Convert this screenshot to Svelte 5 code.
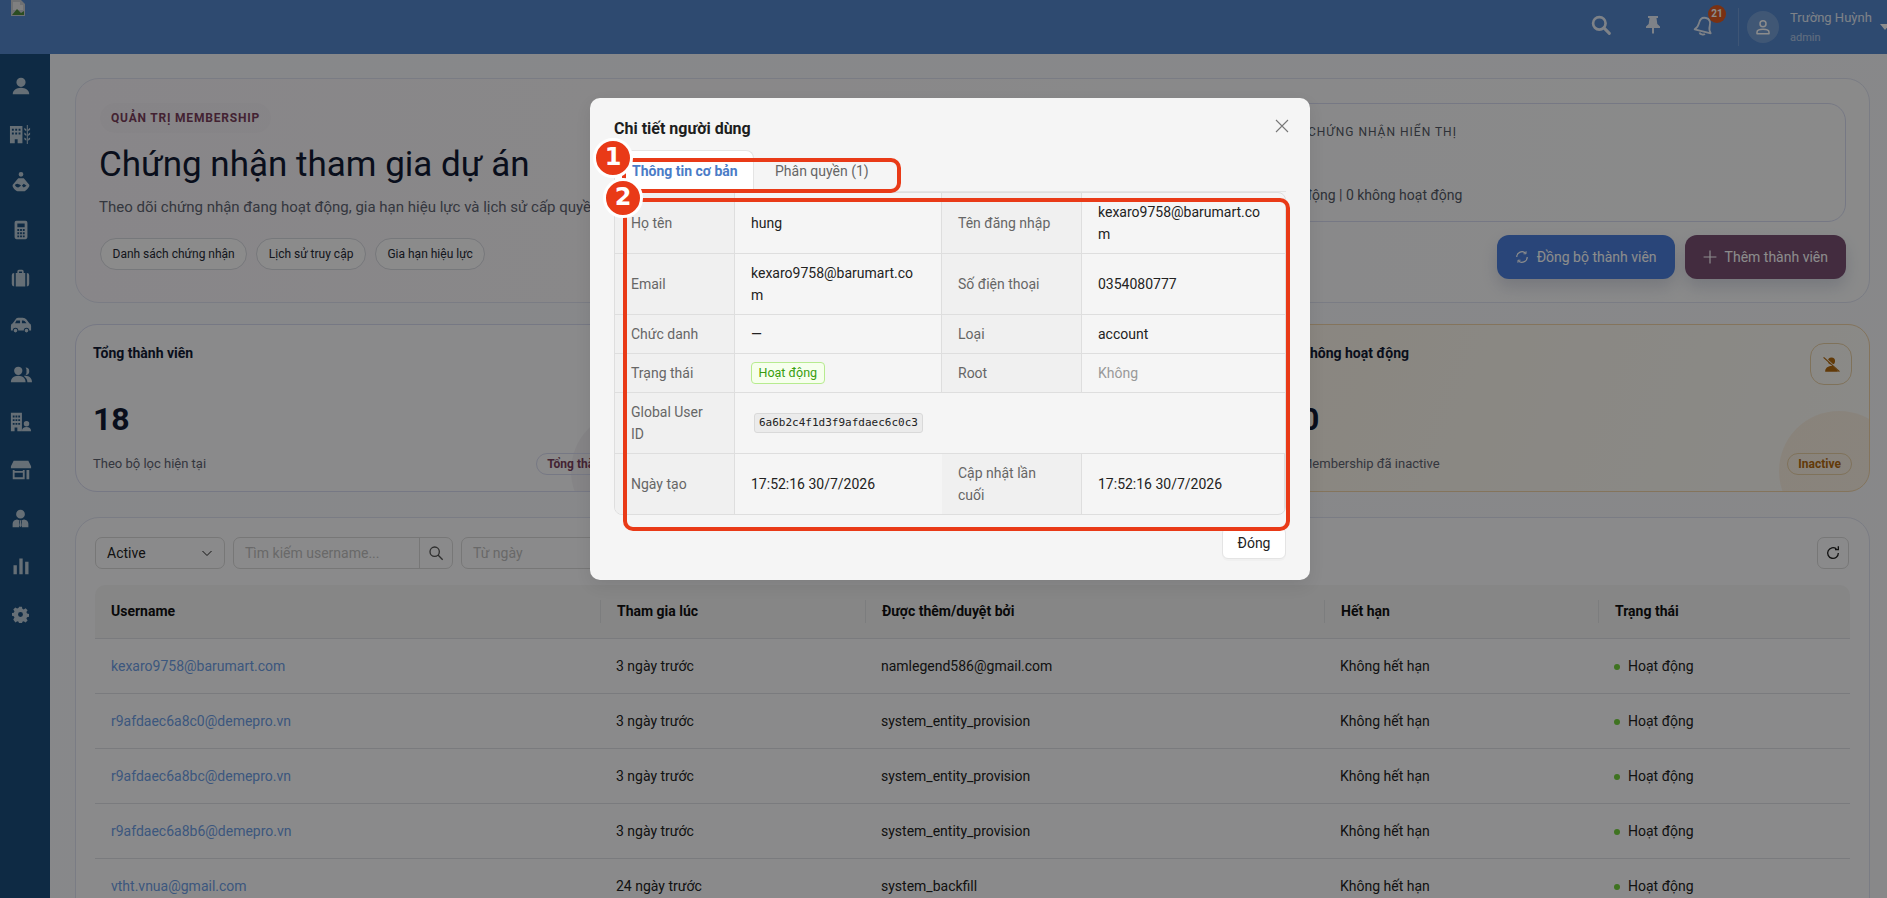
<script>
  const navIcons = [
    { size: 22, d: 'M12 3a5 5 0 1 1 0 10 5 5 0 0 1 0-10zM3 21c0-4 4-7 9-7s9 3 9 7z' },
    { size: 23, d: 'M1 3h13v18H9v-4H6v4H1zM3 6v2h2V6zm3.500 0v2h2V6zm3.500 0v2h2V6zM3 10v2h2v-2zm3.500 0v2h2v-2zm3.500 0v2h2v-2zM18.600 2h1v20h-1zM16 5l2 1.500v2L16 7zM22 5l-2 1.500v2L22 7zM16 10l2 1.500v2L16 12zM22 10l-2 1.500v2L22 12zM16 15l2 1.500v2L16 17zM22 15l-2 1.500v2L22 17z' },
    { size: 22, d: 'M12 1a2.600 2.600 0 1 1 0 5.200 2.600 2.600 0 0 1 0-5.200zM9 8h6l6 7c1 2-3 6-5 7H8c-3-1-6-5-5-7zM8 14c-1.500 0-2.500 1-2.500 1.500S7 18 9 18l3-2-1-1zM15 14l-2 2 2 2 3-2z' },
    { size: 22, d: 'M7 2h10a2 2 0 0 1 2 2v16a2 2 0 0 1-2 2H7a2 2 0 0 1-2-2V4a2 2 0 0 1 2-2zm1 3v4h8V5zm0 6v2h2v-2zm3 0v2h2v-2zm3 0v2h2v-2zM8 14.500v2h2v-2zm3 0v2h2v-2zm3 0v2h2v-2zM8 18v2h2v-2zm3 0v2h2v-2zm3 0v2h2v-2z' },
    { size: 19, d: 'M8 5V3a2 2 0 0 1 2-2h4a2 2 0 0 1 2 2v2h2v17H6V5zm2 0h4V3h-4zM4 5v17a3 3 0 0 1-3-3V8a3 3 0 0 1 3-3zM20 5a3 3 0 0 1 3 3v11a3 3 0 0 1-3 3z' },
    { size: 22, d: 'M6 5a3 3 0 0 1 3-2h5a6 6 0 0 1 4 2l3 4a3 3 0 0 1 2 3v5h-2a3 3 0 0 0-6 0H9a3 3 0 0 0-6 0H1v-5a3 3 0 0 1 2-3zm1 1L5.500 9H11V6zm6 0v3h5l-2-2.500A3 3 0 0 0 14 6zM6 15a2 2 0 1 1 0 4 2 2 0 0 1 0-4zm12 0a2 2 0 1 1 0 4 2 2 0 0 1 0-4z' },
    { size: 22, d: 'M9 4a4.500 4.500 0 1 1 0 9 4.500 4.500 0 0 1 0-9zM1 21c0-4 3-7 8-7s8 3 8 7zM17 5a4 4 0 1 1 0 8 5 5 0 0 0 1-4 5 5 0 0 0-1-4zM15 14h2c4 0 7 3 7 7h-5c0-3-2-5-4-7z' },
    { size: 22, d: 'M1 2h12v20H8v-4H5v4H1zM3 5v2h2V5zm3 0v2h2V5zm3 0v2h2V5zM3 9v2h2V9zm3 0v2h2V9zm3 0v2h2V9zM3 13v2h2v-2zm3 0v2h2v-2zm3 0v2h2v-2zM18 11a3 3 0 1 1 0 6 3 3 0 0 1 0-6zM13 22c0-3 2-4.500 5-4.500s5 1.500 5 4.500z' },
    { size: 22, d: 'M4 2h16l3 6v2H1V8zM3 12h2v1h9v-1h2v10H3zm2 3v5h9v-5zM18 12h3v10h-3z' },
    { size: 21, d: 'M12 2a5 5 0 1 1 0 10 5 5 0 0 1 0-10zM8 13l2.500 1v8H3v-4c0-3 2-4.500 5-5zM16 13c3 .5 5 2 5 5v4h-7.500v-8zM11 14h2l-.4 2 .6 4-1.200 2-1.200-2 .6-4z' },
    { size: 20, d: 'M10 3h4v19h-4zM3 11h4v11H3zM17 7h4v15h-4z' },
    { size: 17, d: 'M10 1h4l.6 3 2 .9 2.600-1.700 2.800 2.800-1.700 2.600.9 2 3 .6v4l-3 .6-.9 2 1.700 2.600-2.800 2.800-2.600-1.700-2 .9-.6 3h-4l-.6-3-2-.9-2.600 1.700L1.800 19l1.700-2.600-.9-2-3-.6V10l3-.6.9-2L1.800 4.800 4.600 2l2.600 1.700 2-.9zM12 8.500a3.500 3.500 0 1 0 0 7 3.500 3.500 0 0 0 0-7z' }
  ];

  const heroLinks = ['Danh sách chứng nhận', 'Lịch sử truy cập', 'Gia hạn hiệu lực'];

  const members = [
    { name: 'kexaro9758@barumart.com', joined: '3 ngày trước', by: 'namlegend586@gmail.com' },
    { name: 'r9afdaec6a8c0@demepro.vn', joined: '3 ngày trước', by: 'system_entity_provision' },
    { name: 'r9afdaec6a8bc@demepro.vn', joined: '3 ngày trước', by: 'system_entity_provision' },
    { name: 'r9afdaec6a8b6@demepro.vn', joined: '3 ngày trước', by: 'system_entity_provision' },
    { name: 'vtht.vnua@gmail.com', joined: '24 ngày trước', by: 'system_backfill' }
  ];

  const columns = ['Username', 'Tham gia lúc', 'Được thêm/duyệt bởi', 'Hết hạn', 'Trạng thái'];
</script>

<div class="page">
  <header class="topbar">
    <svg class="broken" viewBox="0 0 16 16" width="16" height="16">
      <path d="M1 0h10l4 4v12H1z" fill="#c9ccd2" />
      <path d="M3 2h7v3h3v5H3z" fill="#e8e8ea" />
      <path d="M2 15l5-6 4 4 3-2v4z" fill="#4f8a3c" />
    </svg>
    <div class="spacer"></div>
    <svg class="search-icon" viewBox="0 0 24 24" width="20" height="20"><circle cx="10" cy="10" r="7.500" fill="none" stroke="currentColor" stroke-width="3.200" /><path d="M15.500 15.500l6.500 6.500" stroke="currentColor" stroke-width="3.600" stroke-linecap="round" /></svg>
    <svg class="pin-icon" viewBox="0 0 14 18" width="14" height="18"><path d="M2 0h10v2h-1.500l.8 6 2.700 2.500V12H8v5l-1 1-1-1v-5H0v-1.500L2.700 8l.8-6H2z" fill="currentColor" /></svg>
    <div class="bell">
      <svg viewBox="0 0 24 24" width="22" height="22" class="bell-svg"><path d="M12 3c4 0 6 3 6 7 0 4 1 6 3 8H3c2-2 3-4 3-8 0-4 2-7 6-7zM9 20c1 2 5 2 6 0" fill="none" stroke="currentColor" stroke-width="2" stroke-linejoin="round" /></svg>
      <span class="count">21</span>
    </div>
    <div class="divider"></div>
    <div class="avatar">
      <svg viewBox="0 0 24 24" width="18" height="18"><circle cx="12" cy="7.500" r="4" fill="none" stroke="currentColor" stroke-width="2" /><path d="M4 21v-2c0-3 3-4 8-4s8 1 8 4v2z" fill="none" stroke="currentColor" stroke-width="2" stroke-linejoin="round" /></svg>
    </div>
    <div class="who">
      <div class="who-name">Trường Huỳnh</div>
      <div class="who-role">admin</div>
    </div>
    <span class="caret"></span>
  </header>

  <div class="body">
    <nav class="sidebar">
      {#each navIcons as icon}
        <div class="nav-item"><svg viewBox="0 0 24 24" width={icon.size} height={icon.size}><path d={icon.d} fill="currentColor" fill-rule="evenodd" /></svg></div>
      {/each}
    </nav>

    <main class="main">
      <section class="hero">
        <div class="hero-left">
          <span class="eyebrow">QUẢN TRỊ MEMBERSHIP</span>
          <h1>Chứng nhận tham gia dự án</h1>
          <p>Theo dõi chứng nhận đang hoạt động, gia hạn hiệu lực và lịch sử cấp quyền</p>
          <div class="hero-links">
            {#each heroLinks as link}
              <span class="hero-link">{link}</span>
            {/each}
          </div>
        </div>
        <div class="hero-right">
          <div class="panel">
            <div class="panel-label">TỔNG CHỨNG NHẬN HIỂN THỊ</div>
            <div class="panel-note">18 hoạt động | 0 không hoạt động</div>
          </div>
          <div class="actions">
            <button class="btn sync">
              <svg viewBox="0 0 24 24" width="14" height="14"><path d="M21 12a9 9 0 0 1-15.500 6.200M3 12A9 9 0 0 1 18.500 5.800" fill="none" stroke="currentColor" stroke-width="2" /><path d="M19 2v4.500h-4.500M5 22v-4.500h4.500" fill="none" stroke="currentColor" stroke-width="1.500" /></svg>
              Đồng bộ thành viên
            </button>
            <button class="btn add">
              <svg viewBox="0 0 24 24" width="14" height="14"><path d="M12 1v22M1 12h22" stroke="currentColor" stroke-width="2" /></svg>
              Thêm thành viên
            </button>
          </div>
        </div>
      </section>

      <section class="stats">
        <div class="stat">
          <div class="stat-head"><span class="stat-title">Tổng thành viên</span></div>
          <div class="stat-num">18</div>
          <div class="stat-foot"><span>Theo bộ lọc hiện tại</span><span class="chip">Tổng thành viên</span></div>
          <div class="blob"></div>
        </div>
        <div class="stat"></div>
        <div class="stat warn">
          <div class="stat-head">
            <span class="stat-title">Không hoạt động</span>
            <span class="stat-icon">
              <svg viewBox="0 0 24 24" width="19" height="19"><path d="M12 3a4.500 4.500 0 1 1 0 9 4.500 4.500 0 0 1 0-9zM4 21c0-4 3-7 8-7s8 3 8 7z" fill="currentColor" /><path d="M3 3l20 18" stroke="#fbf7ee" stroke-width="2" /><path d="M2 3l20 18" stroke="currentColor" stroke-width="1.600" /></svg>
            </span>
          </div>
          <div class="stat-num">0</div>
          <div class="stat-foot"><span>Membership đã inactive</span><span class="chip">Inactive</span></div>
          <div class="blob"></div>
        </div>
      </section>

      <section class="list">
        <div class="filters">
          <div class="select">Active
            <svg viewBox="0 0 12 12" width="12" height="12"><path d="M1.500 4l4.500 4.500L10.500 4" fill="none" stroke="currentColor" stroke-width="1" /></svg>
          </div>
          <div class="search">
            <span class="ph">Tìm kiếm username...</span>
            <span class="search-btn">
              <svg viewBox="0 0 24 24" width="16" height="16"><circle cx="10" cy="10" r="7" fill="none" stroke="currentColor" stroke-width="2" /><path d="M15 15l7 7" stroke="currentColor" stroke-width="2" /></svg>
            </span>
          </div>
          <div class="dates"><span class="ph">Từ ngày</span><span class="ph dash">→</span></div>
          <div class="spacer"></div>
          <div class="refresh">
            <svg viewBox="0 0 24 24" width="16" height="16"><path d="M20 12a8 8 0 1 1-3-6.200" fill="none" stroke="currentColor" stroke-width="2" /><path d="M20 2v5h-5" fill="none" stroke="currentColor" stroke-width="2" /></svg>
          </div>
        </div>

        <div class="table">
          <div class="row head">
            {#each columns as col}
              <div class="cell">{col}</div>
            {/each}
          </div>
          {#each members as m}
            <div class="row">
              <div class="cell link">{m.name}</div>
              <div class="cell">{m.joined}</div>
              <div class="cell">{m.by}</div>
              <div class="cell">Không hết hạn</div>
              <div class="cell"><span class="dot"></span>Hoạt động</div>
            </div>
          {/each}
        </div>
      </section>
    </main>
  </div>

  <div class="mask"></div>

  <div class="modal">
    <button class="close" aria-label="Đóng">
      <svg viewBox="0 0 14 14" width="14" height="14"><path d="M1 1l12 12M13 1L1 13" stroke="currentColor" stroke-width="1.100" /></svg>
    </button>
    <h2>Chi tiết người dùng</h2>
    <div class="tabs">
      <div class="tab active">Thông tin cơ bản</div>
      <div class="tab">Phân quyền (1)</div>
    </div>
    <div class="detail">
      <div class="k">Họ tên</div><div class="v">hung</div>
      <div class="k">Tên đăng nhập</div><div class="v">kexaro9758@barumart.com</div>
      <div class="k">Email</div><div class="v">kexaro9758@barumart.com</div>
      <div class="k">Số điện thoại</div><div class="v">0354080777</div>
      <div class="k">Chức danh</div><div class="v">—</div>
      <div class="k">Loại</div><div class="v">account</div>
      <div class="k">Trạng thái</div><div class="v"><span class="tag">Hoạt động</span></div>
      <div class="k">Root</div><div class="v muted">Không</div>
      <div class="k">Global User ID</div><div class="v wide"><code>6a6b2c4f1d3f9afdaec6c0c3</code></div>
      <div class="k last">Ngày tạo</div><div class="v last">17:52:16 30/7/2026</div>
      <div class="k last">Cập nhật lần cuối</div><div class="v last">17:52:16 30/7/2026</div>
    </div>
    <div class="modal-foot"><button class="done">Đóng</button></div>

    <div class="mark mark-tabs"></div>
    <div class="mark mark-table"></div>
    <span class="num num-1">1</span>
    <span class="num num-2">2</span>
  </div>
</div>

<style>
  :global(body) {
    margin: 0;
    font-family: Roboto, "Noto Sans", sans-serif;
    color: #1f2937;
  }

  .page {
    position: relative;
    width: 1887px;
    height: 898px;
    overflow: hidden;
    background: linear-gradient(135deg, #f6f7fc, #f7f8fa);
  }

  .spacer { flex: 1; }

  .topbar {
    height: 54px;
    background: #5487cc;
    display: flex;
    align-items: center;
    color: #fff;
    box-sizing: border-box;
  }
  .broken { align-self: flex-start; margin-left: 10px; }
  .search-icon { margin: 0 35px 4px 0; opacity: .85; }
  .pin-icon { margin: 0 33px 4px 0; opacity: .85; }
  .bell { position: relative; width: 24px; height: 24px; margin-right: 21px; }
  .bell-svg { transform: rotate(14deg); opacity: .85; }
  .count {
    position: absolute;
    left: 15px;
    top: -10px;
    width: 18px;
    height: 18px;
    border-radius: 50%;
    background: #de5a22;
    font-size: 10px;
    font-weight: 700;
    line-height: 18px;
    text-align: center;
  }
  .divider { width: 1px; height: 38px; background: rgba(255,255,255,.18); }
  .avatar {
    width: 32px;
    height: 32px;
    margin-left: 8px;
    border-radius: 50%;
    background: rgba(255,255,255,.2);
    display: flex;
    align-items: center;
    justify-content: center;
  }
  .who { margin-left: 11px; width: 90px; flex: none; }
  .who-name { font-size: 13px; line-height: 16px; opacity: .85; }
  .who-role { font-size: 11px; line-height: 14px; margin-top: 5px; opacity: .55; }
  .caret {
    flex: none;
    width: 0;
    height: 0;
    margin-right: -3px;
    border-left: 5px solid transparent;
    border-right: 5px solid transparent;
    border-top: 6px solid #fff;
  }

  .body { display: flex; height: 844px; }
  .sidebar {
    width: 50px;
    flex: none;
    background: #1b4e7c;
    color: rgba(255,255,255,.7);
    padding-top: 8px;
    box-sizing: border-box;
  }
  .nav-item {
    width: 41px;
    height: 48px;
    display: flex;
    align-items: center;
    justify-content: center;
  }

  .main {
    flex: 1;
    min-width: 0;
    padding: 24px 17px 0 25px;
    box-sizing: border-box;
  }

  .hero {
    height: 225px;
    box-sizing: border-box;
    padding: 24px 23px 24px 24px;
    display: grid;
    grid-template-columns: 1fr 611px;
    border: 1px solid #dfe2f0;
    border-radius: 24px;
    background: linear-gradient(90deg, #f8f5f9, #fbfcfc);
  }
  .hero-left { min-width: 0; }
  .eyebrow {
    display: block;
    width: fit-content;
    padding: 0 11px;
    font-size: 12px;
    font-weight: 700;
    letter-spacing: .8px;
    line-height: 30px;
    border-radius: 15px;
    color: #7a3f5c;
    background: rgba(122,63,92,.02);
  }
  h1 {
    margin: 9px 0 0 -1px;
    font-size: 35px;
    font-weight: 400;
    line-height: 46px;
    color: #111a33;
  }
  .hero-left p {
    margin: 8px 0 0 -1px;
    font-size: 15px;
    line-height: 22px;
    color: #5f6472;
    white-space: nowrap;
  }
  .hero-links { display: flex; gap: 9px; margin-top: 20px; }
  .hero-link {
    padding: 0 11.500px;
    font-size: 12px;
    line-height: 30px;
    border: 1px solid #d8dae0;
    border-radius: 16px;
    color: #262a35;
    background: #fdfdfe;
  }
  .hero-right { display: flex; flex-direction: column; gap: 13px; }
  .panel {
    height: 119px;
    box-sizing: border-box;
    padding: 18px 20px 16px 17px;
    border: 1px solid #d8dbf0;
    border-radius: 18px;
    display: flex;
    flex-direction: column;
    justify-content: space-between;
  }
  .panel-label { font-size: 12px; letter-spacing: 1px; color: #555a66; line-height: 20px; margin-left: 15px; }
  .panel-note { font-size: 14px; color: #555a66; line-height: 20px; }
  .actions { display: flex; justify-content: flex-end; gap: 10px; }
  .btn {
    height: 44px;
    border: 0;
    border-radius: 12px;
    padding: 0 18px;
    font: 14px Roboto, sans-serif;
    color: #fff;
    display: flex;
    align-items: center;
    gap: 8px;
    box-shadow: 0 8px 16px rgba(60,70,120,.18);
  }
  .sync { background: #4c7fdc; }
  .add { background: #7a5074; }

  .stats {
    display: grid;
    grid-template-columns: repeat(3, 1fr);
    gap: 17px;
    margin-top: 21px;
  }
  .stat {
    position: relative;
    overflow: hidden;
    height: 168px;
    box-sizing: border-box;
    padding: 18px 17px 0;
    border: 1px solid #d8dbf0;
    border-radius: 22px;
    background: #fbfbfd;
  }
  .stat.warn {
    border-color: #f0d3a8;
    background: linear-gradient(110deg, #fbf5ea, #fcfbf7);
  }
  .stat-head { height: 42px; display: flex; justify-content: space-between; align-items: flex-start; }
  .stat-title { font-size: 14px; font-weight: 700; line-height: 20px; color: #111a33; }
  .stat-icon {
    width: 42px;
    height: 42px;
    box-sizing: border-box;
    border: 1px solid #e8cfa5;
    border-radius: 14px;
    display: flex;
    align-items: center;
    justify-content: center;
    color: #b26a10;
    position: relative;
    z-index: 1;
  }
  .stat-num { margin-top: 14px; font-size: 32px; font-weight: 700; line-height: 40px; color: #111a33; }
  .stat-foot {
    position: relative;
    z-index: 1;
    margin-top: 14px;
    display: flex;
    justify-content: space-between;
    align-items: center;
    font-size: 13px;
    line-height: 22px;
    color: #5f6472;
  }
  .chip {
    padding: 0 10px;
    font-size: 12px;
    font-weight: 700;
    line-height: 20px;
    border: 1px solid #d8dbf0;
    border-radius: 11px;
    color: #7a3f5c;
  }
  .warn .chip { border-color: #e8cfa5; color: #b26a10; }
  .blob {
    position: absolute;
    right: -30px;
    bottom: -40px;
    width: 120px;
    height: 120px;
    border-radius: 50%;
    background: rgba(120,80,120,.06);
  }
  .warn .blob { background: rgba(230,170,90,.13); }

  .list {
    margin-top: 25px;
    height: 500px;
    box-sizing: border-box;
    padding: 19px 19px 0;
    border: 1px solid #dfe2f0;
    border-radius: 24px;
    background: #fcfcfd;
  }
  .filters { display: flex; gap: 8px; height: 32px; font-size: 14px; }
  .select, .search, .dates, .refresh {
    box-sizing: border-box;
    height: 32px;
    border: 1px solid #d9d9d9;
    border-radius: 7px;
    display: flex;
    align-items: center;
  }
  .select { width: 130px; padding: 0 11px; justify-content: space-between; color: #222; }
  .search { width: 220px; padding-left: 11px; }
  .search .ph { flex: 1; }
  .search-btn {
    width: 32px;
    height: 30px;
    border-left: 1px solid #d9d9d9;
    display: flex;
    align-items: center;
    justify-content: center;
    color: #555;
  }
  .ph { color: #bfbfbf; }
  .dates { width: 260px; padding: 0 11px; justify-content: space-between; }
  .dash { margin-right: 105px; }
  .refresh { width: 32px; justify-content: center; color: #222; margin-right: 1px; }

  .table { margin-top: 16px; font-size: 14px; }
  .row {
    display: grid;
    grid-template-columns: 505px 265px 459px 274px 1fr;
    height: 55px;
    align-items: center;
    border-bottom: 1px solid #dfe1e5;
    box-sizing: border-box;
    color: #222;
  }
  .row .cell { padding-left: 16px; }
  .row.head {
    height: 54px;
    background: #f4f4f5;
    font-weight: 700;
    border-radius: 10px 10px 0 0;
    color: #111;
  }
  .head .cell { border-left: 1px solid #e2e3e6; line-height: 23px; }
  .head .cell:first-child { border-left: 0; }
  .link { color: #6e9ee6; }
  .dot {
    display: inline-block;
    width: 6px;
    height: 6px;
    margin-right: 8px;
    vertical-align: 1px;
    border-radius: 50%;
    background: #73d13d;
  }

  .mask { position: absolute; inset: 0; z-index: 5; background: rgba(0,0,0,.45); }

  .modal {
    position: absolute;
    z-index: 6;
    left: 590px;
    top: 98px;
    width: 720px;
    height: 482px;
    box-sizing: border-box;
    padding: 20px 24px;
    background: #f5f5f5;
    border-radius: 10px;
    box-shadow: 0 6px 16px rgba(0,0,0,.08);
  }
  h2 { margin: 0; font-size: 16px; font-weight: 700; line-height: 22px; color: #1d1d1d; }
  .close {
    position: absolute;
    right: 21px;
    top: 21px;
    padding: 0;
    border: 0;
    background: none;
    color: #777;
    width: 14px;
    height: 14px;
  }
  .tabs {
    display: flex;
    margin-top: 10px;
    height: 42px;
    box-sizing: border-box;
    border-bottom: 1px solid #e4e4e4;
    font-size: 14px;
  }
  .tab {
    height: 41px;
    line-height: 42px;
    padding: 0 21px;
    color: #666;
    white-space: nowrap;
  }
  .tab.active {
    padding: 0 0 0 17px;
    width: 140px;
    box-sizing: border-box;
    background: #fff;
    border: 1px solid #e4e4e4;
    border-bottom: 0;
    border-radius: 8px 8px 0 0;
    color: #4a7cc7;
    font-weight: 700;
    line-height: 40px;
  }
  .detail {
    display: grid;
    grid-template-columns: 120px 207px 140px 203px;
    border: 1px solid #dedede;
    border-radius: 8px;
    overflow: hidden;
    font-size: 14px;
    line-height: 22px;
    box-sizing: border-box;
    width: 672px;
  }
  .k, .v {
    display: flex;
    align-items: center;
    min-width: 0;
    padding: 8px 16px;
    box-sizing: border-box;
    overflow-wrap: anywhere;
    border-bottom: 1px solid #dedede;
    border-right: 1px solid #dedede;
  }
  .k { background: #f0f0f0; color: #666; }
  .v { color: #222; }
  .v:nth-child(4n) { border-right: 0; }
  .last { border-bottom: 0; }
  .v.wide { grid-column: span 3; border-right: 0; }
  .muted { color: #999; }
  .tag {
    display: inline-block;
    box-sizing: border-box;
    padding: 0 6.500px;
    font-size: 12.500px;
    line-height: 20px;
    color: #389e0d;
    background: #f6ffed;
    border: 1px solid #b7eb8f;
    border-radius: 4px;
  }
  code {
    margin-left: 3px;
    padding: 2px 4px;
    font: 11px/14px "DejaVu Sans Mono", monospace;
    background: #ebebeb;
    border: 1px solid #d9d9d9;
    border-radius: 3px;
    color: #222;
  }
  .modal-foot { display: flex; justify-content: flex-end; margin-top: 12px; }
  .done {
    width: 64px;
    height: 32px;
    border: 1px solid #e4e4e4;
    border-radius: 6px;
    background: #fff;
    font: 14px Roboto, sans-serif;
    color: #222;
    box-shadow: 0 2px 0 rgba(0,0,0,.02);
  }

  .mark {
    position: absolute;
    box-sizing: border-box;
    border: 4px solid #e93a17;
    border-radius: 10px;
  }
  .mark-tabs { left: 32px; top: 60px; width: 279px; height: 35px; }
  .mark-table { left: 33px; top: 100px; width: 667px; height: 333px; }
  .num {
    position: absolute;
    box-sizing: border-box;
    width: 40px;
    height: 40px;
    border: 3px solid #fff;
    border-radius: 50%;
    background: #e93a17;
    color: #fff;
    font: 700 24px/33px "DejaVu Sans", sans-serif;
    text-align: center;
  }
  .num-1 { left: 3px; top: 40px; }
  .num-2 { left: 13px; top: 80px; }
</style>
